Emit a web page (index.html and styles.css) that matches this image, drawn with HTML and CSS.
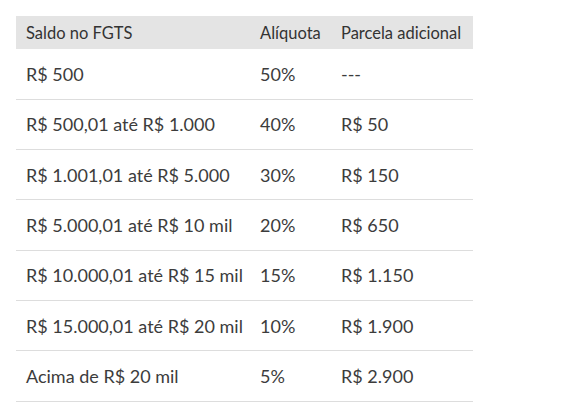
FILE: index.html
```html
<!DOCTYPE html>
<html lang="pt-BR">
<head>
<meta charset="utf-8">
<link rel="stylesheet" href="styles.css">
</head>
<body>
<table class="tbl">
  <colgroup>
    <col class="c1"><col class="c2"><col class="c3">
  </colgroup>
  <thead>
    <tr><th>Saldo no FGTS</th><th>Alíquota</th><th>Parcela adicional</th></tr>
  </thead>
  <tbody>
    <tr><td>R$ 500</td><td>50%</td><td>---</td></tr>
    <tr><td>R$ 500,01 até R$ 1.000</td><td>40%</td><td>R$ 50</td></tr>
    <tr><td>R$ 1.001,01 até R$ 5.000</td><td>30%</td><td>R$ 150</td></tr>
    <tr><td>R$ 5.000,01 até R$ 10 mil</td><td>20%</td><td>R$ 650</td></tr>
    <tr><td>R$ 10.000,01 até R$ 15 mil</td><td>15%</td><td>R$ 1.150</td></tr>
    <tr><td>R$ 15.000,01 até R$ 20 mil</td><td>10%</td><td>R$ 1.900</td></tr>
    <tr><td>Acima de R$ 20 mil</td><td>5%</td><td>R$ 2.900</td></tr>
  </tbody>
</table>
</body>
</html>
```

FILE: styles.css
```css
html, body {
  margin: 0;
  background: #ffffff;
}
body {
  padding: 16px;
  font-family: "Lato", "Liberation Sans", sans-serif;
  color: #3c3c3c;
}
.tbl {
  border-collapse: collapse;
  table-layout: fixed;
  width: 457px;
}
.c1 { width: 234px; }
.c2 { width: 81px; }
.c3 { width: 142px; }
.tbl th {
  background: #e4e4e4;
  font-weight: 400;
  font-size: 16.5px;
  text-align: left;
  height: 33px;
  padding: 0 10px;
  box-sizing: border-box;
  color: #333333;
}
.tbl td {
  font-size: 18px;
  height: 50.3px;
  padding: 0 10px;
  box-sizing: border-box;
  border-bottom: 1px solid #dddddd;
  white-space: nowrap;
}
```
